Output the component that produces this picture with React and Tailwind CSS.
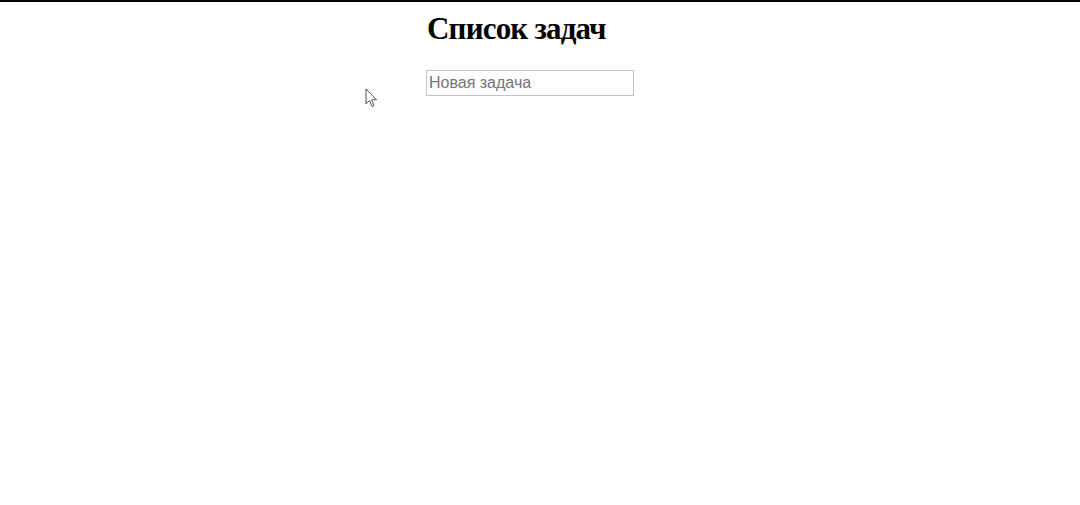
export default function App() {
  return (
    <div className="relative min-h-[505px] bg-white border-t-2 border-black">
      <div className="ml-[426px] w-[230px]">
        <h1
          className="mt-[9px] ml-px text-[31px] leading-[36px] tracking-[-0.8px] font-bold text-black"
          style={{fontFamily: '"Liberation Serif", "Times New Roman", serif'}}
        >
          Список задач
        </h1>
        <input
          type="text"
          placeholder="Новая задача"
          className="mt-[23px] w-[208px] h-[26px] px-[2px] border border-[#c4c4c4] text-[16px] placeholder:text-[#757575] outline-none"
          style={{fontFamily: '"Liberation Sans", Arial, sans-serif'}}
        />
      </div>

      <svg
        className="absolute left-[365px] top-[86px]"
        width="13"
        height="21"
        viewBox="0 0 13 21"
      >
        <path
          d="M1 1 L1 16 L4.5 12.5 L7 18.5 L9 17.6 L6.6 11.8 L11.5 11.8 Z"
          fill="#fff"
          stroke="#555"
          strokeWidth="1"
          strokeLinejoin="round"
        />
      </svg>
    </div>
  );
}
